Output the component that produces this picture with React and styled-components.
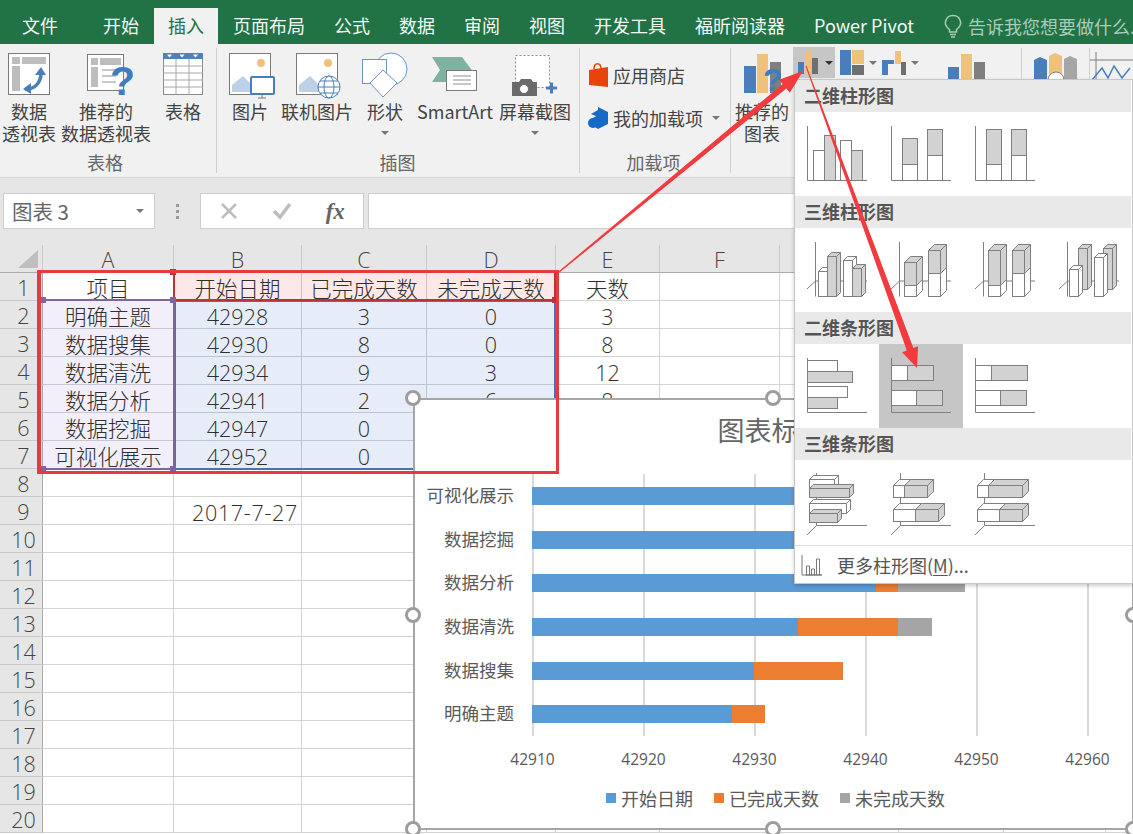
import React from "react";
import styled, { createGlobalStyle } from "styled-components";

const CJK = `"Noto Sans CJK SC", "Noto Sans", sans-serif`;
const CELL_FONT = `"Open Sans", "Noto Sans CJK SC", sans-serif`;

const GlobalStyle = createGlobalStyle`
  html, body {
    margin: 0;
    padding: 0;
    background: #fff;
    overflow: hidden;
  }
  * { box-sizing: border-box; }
  svg { overflow: visible; }
`;

const Page = styled.div`
  position: relative;
  width: 1133px;
  height: 834px;
  overflow: hidden;
  background: #fff;
  font-family: ${CJK};
  display: flex;
  flex-direction: column;
`;

/* ---------- tabs ---------- */
const TabBar = styled.div`
  height: 44px;
  flex: none;
  background: #217346;
  display: flex;
  align-items: flex-end;
  gap: 1px;
  padding-left: 8px;
  white-space: nowrap;
`;

const Tab = styled.div`
  height: 36px;
  padding: 0 14px;
  font-size: 18px;
  line-height: 35px;
  color: ${(p) => (p.$active ? "#217346" : "#f4f8f5")};
  background: ${(p) => (p.$active ? "#f1f1f1" : "transparent")};
  margin-right: ${(p) => p.$mr || 0}px;
`;

const TellMe = styled.div`
  display: flex;
  align-items: center;
  gap: 6px;
  height: 36px;
  margin-left: 15px;
  font-size: 18px;
  color: #a9ccb8;
`;

/* ---------- ribbon ---------- */
const Ribbon = styled.div`
  height: 134px;
  flex: none;
  display: flex;
  background: #f1f1f1;
  border-bottom: 1px solid #d6d6d6;
  color: #444;
`;

const Group = styled.div`
  width: ${(p) => p.$w}px;
  flex: none;
  display: flex;
  flex-direction: column;
  position: relative;
  &::after {
    content: "";
    position: absolute;
    right: 0;
    top: 4px;
    bottom: 4px;
    width: 1px;
    background: #cfcfcf;
  }
`;

const GroupBody = styled.div`
  flex: 1;
  display: flex;
  min-height: 0;
`;

const GroupLabel = styled.div`
  height: 27px;
  padding-right: ${(p) => p.$shift || 0}px;
  text-align: center;
  font-size: 18px;
  line-height: 24px;
  color: #666;
  white-space: nowrap;
`;

const LargeButton = styled.div`
  width: ${(p) => p.$w}px;
  flex: none;
  display: flex;
  flex-direction: column;
  align-items: center;
  font-size: 18px;
  line-height: 22px;
  text-align: center;
  white-space: nowrap;
`;

const IconSlot = styled.div`
  height: 56px;
  padding-top: ${(p) => p.$top ?? 9}px;
  flex: none;
  display: flex;
  align-items: flex-start;
  justify-content: center;
`;

const Caret = styled.span`
  display: inline-block;
  width: 0;
  height: 0;
  border-left: 4px solid transparent;
  border-right: 4px solid transparent;
  border-top: 4px solid ${(p) => p.$color || "#777"};
`;

const CaretLine = styled.div`
  height: 22px;
  display: flex;
  align-items: center;
  justify-content: center;
`;

const SmallColumn = styled.div`
  display: flex;
  flex-direction: column;
  gap: 11px;
  padding: 15px 0 0 8px;
`;

const SmallButton = styled.div`
  display: flex;
  align-items: center;
  gap: 5px;
  height: 32px;
  font-size: 18px;
  white-space: nowrap;
  span { margin-left: 4px; }
`;

const ChartButton = styled.div`
  width: ${(p) => p.$w}px;
  height: 31px;
  margin-top: 3px;
  flex: none;
  display: flex;
  align-items: center;
  gap: 5px;
  padding-left: 5px;
  background: ${(p) => (p.$on ? "#c6c6c6" : "transparent")};
`;

/* ---------- formula bar ---------- */
const FormulaBar = styled.div`
  height: 67px;
  flex: none;
  background: #e6e6e6;
  display: flex;
  padding: 15px 0 0 3px;
`;

const NameBox = styled.div`
  width: 152px;
  height: 36px;
  background: #fff;
  border: 1px solid #cdcdcd;
  display: flex;
  align-items: center;
  justify-content: space-between;
  padding: 0 10px 0 8px;
  font-size: 20.500px;
  color: #666;
`;

const Grip = styled.div`
  width: 45px;
  display: flex;
  flex-direction: column;
  align-items: center;
  justify-content: center;
  gap: 3px;
  height: 36px;
  span {
    width: 3px;
    height: 3px;
    background: #9a9a9a;
  }
`;

const FormulaButtons = styled.div`
  width: 164px;
  height: 36px;
  background: #fff;
  border: 1px solid #cdcdcd;
  display: flex;
  align-items: center;
  justify-content: space-around;
  padding: 0 2px;
  margin-right: 4px;
`;

const Fx = styled.span`
  font-family: "Liberation Serif", serif;
  font-style: italic;
  font-weight: 700;
  font-size: 23px;
  line-height: 1;
  color: #666;
`;

const FormulaInput = styled.div`
  flex: 1;
  height: 36px;
  background: #fff;
  border: 1px solid #cdcdcd;
  border-right: none;
`;

/* ---------- sheet ---------- */
const Sheet = styled.div`
  flex: none;
  display: grid;
  grid-template-columns: 43px 131px 128px 125px 129px 104px 120px 119px 105px 102px 27px;
  grid-auto-rows: 28px;
  font-family: ${CELL_FONT};
  font-size: 21.500px;
  font-weight: 300;
  color: #2f2f2f;
`;

const ColHead = styled.div`
  background: #e6e6e6;
  border-right: 1px solid #c9c9c9;
  border-bottom: 1px solid #ababab;
  text-align: center;
  padding-top: 3px;
  line-height: 24px;
  color: #444;
  position: relative;
`;

const Corner = styled.div`
  position: absolute;
  right: 4px;
  bottom: 4px;
  width: 0;
  height: 0;
  border-left: 20px solid transparent;
  border-bottom: 18px solid #bfbfbf;
`;

const RowHead = styled.div`
  background: #e6e6e6;
  border-right: 1px solid #ababab;
  border-bottom: 1px solid #c9c9c9;
  text-align: center;
  padding: 3px 0 0 5px;
  line-height: 24px;
  color: #444;
`;

const Cell = styled.div`
  background: ${(p) => p.$tint || "#fff"};
  border-right: 1px solid rgba(0, 0, 0, 0.17);
  border-bottom: 1px solid rgba(0, 0, 0, 0.17);
  text-align: ${(p) => (p.$right ? "right" : "center")};
  padding-top: 4px;
  padding-right: ${(p) => (p.$right ? 3 : 0)}px;
  letter-spacing: ${(p) => (p.$right ? 0.7 : 0)}px;
  line-height: 23px;
  white-space: nowrap;
`;

const RangeBox = styled.div`
  position: absolute;
  left: ${(p) => p.$x}px;
  top: ${(p) => p.$y}px;
  width: ${(p) => p.$w}px;
  height: ${(p) => p.$h}px;
  border: 2px solid ${(p) => p.$color};
  pointer-events: none;
`;

const RangeDot = styled.div`
  position: absolute;
  left: ${(p) => p.$x - 3}px;
  top: ${(p) => p.$y - 3}px;
  width: 6px;
  height: 6px;
  background: ${(p) => p.$color};
`;

const RedFrame = styled.div`
  position: absolute;
  left: 37px;
  top: 270px;
  width: 522px;
  height: 204px;
  border: 3px solid #e63a3e;
  border-left-width: 4px;
  pointer-events: none;
`;

/* ---------- chart ---------- */
const Chart = styled.div`
  position: absolute;
  left: 413px;
  top: 398px;
  width: 721px;
  height: 432px;
  background: #fff;
  border: 2px solid #a6a6a6;
  display: flex;
  flex-direction: column;
  color: #595959;
`;

const ChartTitle = styled.div`
  height: 74px;
  padding-top: 9px;
  padding-right: 4px;
  text-align: center;
  font-size: 27px;
  line-height: 42px;
  color: #666;
`;

const Plot = styled.div`
  display: flex;
  height: 262px;
`;

const Categories = styled.div`
  width: 117px;
  flex: none;
  display: flex;
  flex-direction: column;
`;

const Category = styled.div`
  flex: 1;
  padding-right: 18px;
  text-align: right;
  font-size: 17.500px;
  line-height: 42px;
  white-space: nowrap;
`;

const Bars = styled.div`
  width: 558px;
  display: flex;
  flex-direction: column;
  background: repeating-linear-gradient(to right, #d9d9d9 0 2px, transparent 2px 111px);
`;

const BarRow = styled.div`
  flex: 1;
  display: flex;
  align-items: center;
`;

const BarPart = styled.div`
  height: 18px;
  flex: none;
  background: ${(p) => p.$color};
`;

const AxisLabels = styled.div`
  display: grid;
  grid-template-columns: repeat(6, 111px);
  margin-left: 62px;
  height: 46px;
  font-family: "Open Sans", sans-serif;
  font-size: 15.500px;
  line-height: 46px;
  text-align: center;
`;

const Legend = styled.div`
  display: flex;
  justify-content: center;
  gap: 21px;
  padding-left: 4px;
  font-size: 18px;
  line-height: 32px;
`;

const LegendItem = styled.div`
  display: flex;
  align-items: center;
  gap: 5px;
  white-space: nowrap;
`;

const Swatch = styled.span`
  width: 10px;
  height: 10px;
  background: ${(p) => p.$color};
`;

const Handle = styled.div`
  position: absolute;
  left: ${(p) => p.$x - 8}px;
  top: ${(p) => p.$y - 8}px;
  width: 16px;
  height: 16px;
  border-radius: 50%;
  background: #fff;
  border: 3px solid #9d9d9d;
`;

/* ---------- chart type menu ---------- */
const Menu = styled.div`
  position: absolute;
  left: 794px;
  top: 79px;
  width: 339px;
  height: 505px;
  background: #fff;
  border: 1px solid #c6c6c6;
  box-shadow: 0 2px 4px rgba(0, 0, 0, 0.2);
  display: flex;
  flex-direction: column;
`;

const MenuHead = styled.div`
  height: 32px;
  margin-right: 1px;
  flex: none;
  background: #e9e9e9;
  padding-left: 9px;
  font-size: 18px;
  font-weight: 700;
  line-height: 31px;
  color: #555;
`;

const MenuRow = styled.div`
  height: 84px;
  flex: none;
  display: flex;
`;

const MenuCell = styled.div`
  width: 84px;
  height: 84px;
  background: ${(p) => (p.$on ? "#c6c6c6" : "transparent")};
`;

const MenuFoot = styled.div`
  flex: 1;
  margin-top: 1px;
  border-top: 1px solid #e1e1e1;
  display: flex;
  align-items: center;
  gap: 14px;
  padding-left: 6px;
  font-size: 18px;
  color: #555;
  u { text-underline-offset: 2px; }
`;

const Overlay = styled.svg`
  position: absolute;
  left: 0;
  top: 0;
  pointer-events: none;
`;

/* ---------- ribbon icons ---------- */
const PivotIcon = () => (
  <svg width="42" height="42" viewBox="0 0 42 42">
    <rect x=".5" y=".5" width="41" height="41" fill="#fff" stroke="#7a7a7a" />
    <rect x="4" y="4" width="8" height="7" fill="#bdbdbd" />
    <rect x="14" y="4" width="24" height="7" fill="#bdbdbd" />
    <rect x="4" y="13" width="8" height="25" fill="#bdbdbd" />
    <path d="M17 36 C26 37 33 30 33 20" fill="none" stroke="#4a7ebb" strokeWidth="3.5" />
    <path d="M27 22 L33 14 L38 22 Z M23 30 L15 36 L23 41 Z" fill="#4a7ebb" />
  </svg>
);

const RecommendPivotIcon = () => (
  <svg width="50" height="46" viewBox="-6 0 50 46">
    <rect x=".5" y=".5" width="36" height="36" fill="#fff" stroke="#7a7a7a" />
    <rect x="4" y="4" width="7" height="7" fill="#bdbdbd" />
    <rect x="13" y="4" width="21" height="7" fill="#bdbdbd" />
    <rect x="4" y="13" width="7" height="20" fill="#bdbdbd" />
    <path d="M15 16h14M15 22h14M15 28h14" stroke="#c9c9c9" strokeWidth="2" />
    <text x="23" y="41" fontFamily="Liberation Sans, sans-serif" fontWeight="700" fontSize="41" fill="#3f7cbf">?</text>
  </svg>
);

const TableIcon = () => (
  <svg width="40" height="42" viewBox="0 0 40 42">
    <rect x=".5" y=".5" width="39" height="41" fill="#fff" stroke="#8a8a8a" />
    <rect width="40" height="6" fill="#4f81bd" />
    <path d="M4 1.5h5l-2.5 3zM16.500 1.500h5l-2.500 3zM30 1.500h5l-2.500 3z" fill="#fff" />
    <path d="M0 13h40M0 20h40M0 27h40M0 34h40M13 6v36M26 6v36" stroke="#a8a8a8" />
  </svg>
);

const PictureIcon = ({ globe }) => (
  <svg width="46" height="46" viewBox="-2 0 46 46">
    <rect x=".5" y=".5" width="41" height="41" fill="#fff" stroke="#7a7a7a" />
    <circle cx="32" cy="10" r="4" fill="#efc27c" />
    <path d="M3 39 L3 32 L14 23 L24 33 L24 39 Z" fill="#bcd0e8" />
    {globe ? (
      <g fill="#fff" stroke="#4a7ebb" strokeWidth="1">
        <circle cx="33" cy="34" r="11" />
        <ellipse cx="33" cy="34" rx="5" ry="11" />
        <path d="M22 34h22M24 28h18M24 40h18" />
      </g>
    ) : (
      <g>
        <rect x="22" y="24" width="23" height="17" rx="1" fill="#fff" stroke="#4a7ebb" strokeWidth="2" />
        <path d="M33 42v3M29 45h8" stroke="#7a7a7a" />
      </g>
    )}
  </svg>
);

const ShapesIcon = () => (
  <svg width="46" height="46" viewBox="0 0 46 46">
    <circle cx="29" cy="17" r="16" fill="#fff" stroke="#6b93c4" />
    <rect x=".5" y="7.500" width="24" height="24" fill="#fff" stroke="#6b93c4" />
    <path d="M21 18 L35 31 L21 45 L8 31 Z" fill="#fff" stroke="#6b93c4" />
  </svg>
);

const SmartArtIcon = () => (
  <svg width="46" height="38" viewBox="0 0 46 38">
    <path d="M0 1h30l12 16h-13v9H0l8-12z" fill="#7fb2a2" />
    <rect x="14.500" y="14.500" width="30" height="20" fill="#fff" stroke="#7a7a7a" />
    <path d="M21 20h18M21 24h18M21 28h18" stroke="#8f8f8f" />
  </svg>
);

const ScreenshotIcon = () => (
  <svg width="46" height="44" viewBox="0 0 46 44">
    <rect x="3.500" y=".5" width="34" height="32" fill="#fff" stroke="#8f8f8f" strokeDasharray="2 2" />
    <path d="M0 27h7l2-3h10l2 3h4v14H0z" fill="#6a6a6a" />
    <circle cx="12" cy="34" r="4.500" fill="#fff" stroke="#6a6a6a" />
    <path d="M34 33h11M39.500 27.500v11" stroke="#4a7ebb" strokeWidth="3" />
  </svg>
);

const StoreIcon = () => (
  <svg width="20" height="26" viewBox="0 0 20 26">
    <path d="M6 7 C6 0 13 0 13 7" fill="none" stroke="#e8430a" strokeWidth="1.500" />
    <path d="M1 8 L20 5 V25 L1 23 Z" fill="#e8430a" />
  </svg>
);

const AddinIcon = () => (
  <svg width="20" height="24" viewBox="0 0 20 24">
    <path d="M10 1 L20 6 V18 L10 23 L5 20 V12 L10 9z" fill="#1569c7" />
    <path d="M3 8 L10 4 L17 8 L10 11z" fill="#1569c7" />
    <circle cx="5" cy="17" r="5" fill="#1569c7" />
  </svg>
);

const RecommendChartIcon = () => (
  <svg width="56" height="42" viewBox="-10 0 56 42">
    <rect x="0" y="12" width="12" height="27" fill="#4a7ebb" />
    <rect x="13" y="0" width="11" height="39" fill="#efc27c" />
    <rect x="26" y="8" width="11" height="31" fill="#7f7f7f" />
    <text x="19" y="37" fontFamily="Liberation Sans, sans-serif" fontWeight="700" fontSize="32" fill="#3f7cbf">?</text>
  </svg>
);

const ColumnTypeIcon = () => (
  <svg width="22" height="26" viewBox="0 0 22 26">
    <rect x="0" y="12" width="6" height="12" fill="#4a7ebb" />
    <rect x="7" y="1" width="6" height="23" fill="#efc27c" />
    <rect x="14" y="8" width="6" height="16" fill="#6f6f6f" />
  </svg>
);

const HierarchyIcon = () => (
  <svg width="24" height="26" viewBox="0 0 24 26">
    <rect x="0" y="0" width="11" height="25" fill="#4a7ebb" />
    <rect x="12" y="0" width="12" height="14" fill="#efc27c" />
    <rect x="12" y="15" width="12" height="10" fill="#6f6f6f" />
  </svg>
);

const WaterfallIcon = () => (
  <svg width="24" height="26" viewBox="0 0 24 26">
    <rect x="0" y="10" width="6" height="15" fill="#4a7ebb" />
    <rect x="6" y="10" width="6" height="4" fill="#4a7ebb" />
    <rect x="13" y="1" width="6" height="13" fill="#efc27c" />
    <rect x="19" y="12" width="5" height="13" fill="#6f6f6f" />
  </svg>
);

const PivotChartIcon = () => (
  <svg width="38" height="38" viewBox="0 0 38 38">
    <rect x="0" y="13" width="11" height="25" fill="#4a7ebb" />
    <rect x="13" y="0" width="11" height="38" fill="#efc27c" />
    <rect x="26" y="8" width="11" height="30" fill="#7f7f7f" />
  </svg>
);

const MapIcon = () => (
  <svg width="44" height="30" viewBox="0 0 44 30">
    <path d="M0 8l6-3 7 3v22H0z" fill="#4a7ebb" />
    <path d="M15 4l6-3 7 3v26H15z" fill="#efc27c" />
    <path d="M30 7l6-3 7 3v23H30z" fill="#a6a6a6" />
    <circle cx="22" cy="28" r="8" fill="#fff" stroke="#7f7f7f" />
  </svg>
);

const SparkIcon = () => (
  <svg width="44" height="30" viewBox="0 0 44 30">
    <path d="M6 0v30M0 8h44" stroke="#7f7f7f" />
    <path d="M2 28 L12 16 L18 26 L24 14 L32 26 L40 16" fill="none" stroke="#4a7ebb" strokeWidth="1.500" />
  </svg>
);

const BulbIcon = () => (
  <svg width="18" height="24" viewBox="0 0 18 24">
    <path d="M5.500 15.500 C2 13 1 10 1.500 7.500 C2.500 3 6 1.500 9 1.500 C12 1.500 15.500 3 16.500 7.500 C17 10 16 13 12.500 15.500 V18 H5.500 Z" fill="none" stroke="#a9ccb8" strokeWidth="1.500" />
    <path d="M6 20.500h6M7 23h4" stroke="#a9ccb8" strokeWidth="1.500" />
  </svg>
);

const CrossIcon = () => (
  <svg width="20" height="20" viewBox="0 0 20 20">
    <path d="M3 3L17 17M17 3L3 17" stroke="#bdbdbd" strokeWidth="2.500" />
  </svg>
);

const CheckIcon = () => (
  <svg width="22" height="20" viewBox="0 0 22 20">
    <path d="M3 10 L9 16 L19 3" fill="none" stroke="#bdbdbd" strokeWidth="3.500" />
  </svg>
);

/* ---------- menu icons ---------- */
const LINE = "#7f7f7f";
const GREY = "#d2d2d2";

const Box = ({ x, y, w, h, fill = "#fff" }) => (
  <rect x={x} y={y} width={w} height={h} fill={fill} stroke={LINE} />
);

const Box3D = ({ x, y, w, h, d = 4, fill = "#fff" }) => (
  <g fill={fill} stroke={LINE}>
    <rect x={x} y={y} width={w} height={h} />
    <polygon points={`${x},${y} ${x + d},${y - d} ${x + w + d},${y - d} ${x + w},${y}`} />
    <polygon points={`${x + w},${y} ${x + w + d},${y - d} ${x + w + d},${y + h - d} ${x + w},${y + h}`} />
  </g>
);

const MenuIcon = ({ children }) => (
  <svg width="84" height="84" viewBox="0 0 84 84" style={{ display: "block" }}>
    {children}
  </svg>
);

const Axes2D = () => <path d="M12.500 14V68.500H72" fill="none" stroke={LINE} />;
const Axes3D = () => <path d="M20.500 14V68.500M20.500 53H72M20.500 53L12 61" fill="none" stroke={LINE} />;
const AxesBar3D = () => <path d="M21.500 13V65.500H72M21.500 65.500L12 75" fill="none" stroke={LINE} />;

const menuSections = [
  {
    title: "二维柱形图",
    icons: [
      <MenuIcon key="a">
        <Box x={18.5} y={38.5} w={11} h={30} />
        <Box x={29.5} y={23.5} w={11} h={45} fill={GREY} />
        <Box x={45.5} y={28.5} w={11} h={40} />
        <Box x={56.5} y={38.5} w={11} h={30} fill={GREY} />
        <Axes2D />
      </MenuIcon>,
      <MenuIcon key="b">
        <Box x={23.5} y={52.5} w={15} h={16} />
        <Box x={23.5} y={26.5} w={15} h={26} fill={GREY} />
        <Box x={48.5} y={43.5} w={15} h={25} />
        <Box x={48.5} y={17.5} w={15} h={26} fill={GREY} />
        <Axes2D />
      </MenuIcon>,
      <MenuIcon key="c">
        <Box x={23.5} y={52.5} w={15} h={16} />
        <Box x={23.5} y={17.5} w={15} h={35} fill={GREY} />
        <Box x={48.5} y={43.5} w={15} h={25} />
        <Box x={48.5} y={17.5} w={15} h={26} fill={GREY} />
        <Axes2D />
      </MenuIcon>,
    ],
  },
  {
    title: "三维柱形图",
    icons: [
      <MenuIcon key="a">
        <Axes3D />
        <Box3D x={23.5} y={43.5} w={9} h={25} />
        <Box3D x={32.5} y={28.5} w={9} h={40} fill={GREY} />
        <Box3D x={48.5} y={32.5} w={9} h={36} />
        <Box3D x={57.5} y={40.5} w={9} h={28} fill={GREY} />
      </MenuIcon>,
      <MenuIcon key="b">
        <Axes3D />
        <Box3D x={25.5} y={57.5} w={12} h={11} d={6} />
        <Box3D x={25.5} y={34.5} w={12} h={23} d={6} fill={GREY} />
        <Box3D x={49.5} y={45.5} w={12} h={23} d={6} />
        <Box3D x={49.5} y={22.5} w={12} h={23} d={6} fill={GREY} />
      </MenuIcon>,
      <MenuIcon key="c">
        <Axes3D />
        <Box3D x={25.5} y={57.5} w={12} h={11} d={6} />
        <Box3D x={25.5} y={22.5} w={12} h={35} d={6} fill={GREY} />
        <Box3D x={49.5} y={45.5} w={12} h={23} d={6} />
        <Box3D x={49.5} y={22.5} w={12} h={23} d={6} fill={GREY} />
      </MenuIcon>,
      <MenuIcon key="d">
        <Axes3D />
        <Box3D x={31.5} y={20.5} w={9} h={41} fill={GREY} />
        <Box3D x={56.5} y={20.5} w={9} h={41} fill={GREY} />
        <Box3D x={22.5} y={41.5} w={9} h={27} />
        <Box3D x={47.5} y={29.5} w={9} h={39} />
      </MenuIcon>,
    ],
  },
  {
    title: "二维条形图",
    icons: [
      <MenuIcon key="a">
        <Box x={12.5} y={16.5} w={30} h={11} />
        <Box x={12.5} y={27.5} w={45} h={11} fill={GREY} />
        <Box x={12.5} y={42.5} w={40} h={11} />
        <Box x={12.5} y={53.5} w={30} h={11} fill={GREY} />
        <Axes2D />
      </MenuIcon>,
      <MenuIcon key="b">
        <Box x={12.5} y={21.5} w={16} h={15} />
        <Box x={28.5} y={21.5} w={26} h={15} fill={GREY} />
        <Box x={12.5} y={46.5} w={25} h={15} />
        <Box x={37.5} y={46.5} w={26} h={15} fill={GREY} />
        <Axes2D />
      </MenuIcon>,
      <MenuIcon key="c">
        <Box x={12.5} y={21.5} w={16} h={15} />
        <Box x={28.5} y={21.5} w={36} h={15} fill={GREY} />
        <Box x={12.5} y={46.5} w={25} h={15} />
        <Box x={37.5} y={46.5} w={26} h={15} fill={GREY} />
        <Axes2D />
      </MenuIcon>,
    ],
  },
  {
    title: "三维条形图",
    icons: [
      <MenuIcon key="a">
        <AxesBar3D />
        <Box3D x={14.5} y={19.5} w={25} h={9} />
        <Box3D x={14.5} y={28.5} w={40} h={9} fill={GREY} />
        <Box3D x={14.5} y={43.5} w={37} h={10} />
        <Box3D x={14.5} y={53.5} w={28} h={9} fill={GREY} />
      </MenuIcon>,
      <MenuIcon key="b">
        <AxesBar3D />
        <Box3D x={14.5} y={25.5} w={11} h={12} d={6} />
        <Box3D x={25.5} y={25.5} w={23} h={12} d={6} fill={GREY} />
        <Box3D x={14.5} y={49.5} w={22} h={12} d={6} />
        <Box3D x={36.5} y={49.5} w={23} h={12} d={6} fill={GREY} />
      </MenuIcon>,
      <MenuIcon key="c">
        <AxesBar3D />
        <Box3D x={14.5} y={25.5} w={11} h={12} d={6} />
        <Box3D x={25.5} y={25.5} w={34} h={12} d={6} fill={GREY} />
        <Box3D x={14.5} y={49.5} w={22} h={12} d={6} />
        <Box3D x={36.5} y={49.5} w={23} h={12} d={6} fill={GREY} />
      </MenuIcon>,
    ],
  },
];

const MoreChartsIcon = () => (
  <svg width="22" height="22" viewBox="0 0 22 22">
    <path d="M1 1V21H21" fill="none" stroke="#777" />
    <path d="M5.500 21V12h3v9M10.500 21V15h3v6M15.500 21V5h3v16M5 21h16" fill="none" stroke="#777" />
  </svg>
);

/* ---------- data ---------- */
const tabs = ["开始", "插入", "页面布局", "公式", "数据", "审阅", "视图", "开发工具", "福昕阅读器", "Power Pivot"];
const columns = ["A", "B", "C", "D", "E", "F", "G", "H", "I", "J"];
const PINK = "#fce9e7";
const BLUE = "#e6edf8";
const LILAC = "#f2eefa";

const table = [
  ["项目", "开始日期", "已完成天数", "未完成天数", "天数"],
  ["明确主题", 42928, 3, 0, 3],
  ["数据搜集", 42930, 8, 0, 8],
  ["数据清洗", 42934, 9, 3, 12],
  ["数据分析", 42941, 2, 6, 8],
  ["数据挖掘", 42947, 0, 5, 5],
  ["可视化展示", 42952, 0, 5, 5],
];

const AXIS_MIN = 42910;
const PX_PER_DAY = 11.1;
const chartRows = table.slice(1).reverse();
const ticks = [42910, 42920, 42930, 42940, 42950, 42960];
const legend = [
  ["开始日期", "#5b9bd5"],
  ["已完成天数", "#ed7d31"],
  ["未完成天数", "#a5a5a5"],
];

const handles = [
  [0, 0],
  [360, 0],
  [720, 0],
  [0, 217],
  [720, 217],
  [0, 431],
  [360, 431],
  [720, 431],
];

const cellValue = (row, col) => {
  if (row === 9 && col === 1) return "2017-7-27";
  const line = table[row - 1];
  return line && line[col] !== undefined ? line[col] : "";
};

const cellTint = (row, col) => {
  if (row === 1 && col >= 1 && col <= 3) return PINK;
  if (row >= 2 && row <= 7 && col === 0) return LILAC;
  if (row >= 2 && row <= 7 && col >= 1 && col <= 3) return BLUE;
  return undefined;
};

// tapered arrow as drawn by hand on top of the screenshot
const arrowPoints = (x1, y1, x2, y2, w0, w1, headLen, headW) => {
  const len = Math.hypot(x2 - x1, y2 - y1);
  const ux = (x2 - x1) / len;
  const uy = (y2 - y1) / len;
  const nx = -uy;
  const ny = ux;
  const bx = x2 - ux * headLen;
  const by = y2 - uy * headLen;
  const p = (x, y, n) => `${x + nx * n},${y + ny * n}`;
  return [
    p(x1, y1, w0 / 2),
    p(bx, by, w1 / 2),
    p(bx, by, headW / 2),
    `${x2},${y2}`,
    p(bx, by, -headW / 2),
    p(bx, by, -w1 / 2),
    p(x1, y1, -w0 / 2),
  ].join(" ");
};

export default function App() {
  return (
    <Page>
      <GlobalStyle />
      <TabBar>
        <Tab $mr={16}>文件</Tab>
        {tabs.map((t) => (
          <Tab key={t} $active={t === "插入"}>
            {t}
          </Tab>
        ))}
        <TellMe>
          <BulbIcon />
          告诉我您想要做什么...
        </TellMe>
      </TabBar>

      <Ribbon>
        <Group $w={217}>
          <GroupBody>
            <LargeButton $w={58}>
              <IconSlot><PivotIcon /></IconSlot>
              数据
              <br />
              透视表
            </LargeButton>
            <LargeButton $w={96}>
              <IconSlot $top={10}><RecommendPivotIcon /></IconSlot>
              推荐的
              <br />
              数据透视表
            </LargeButton>
            <LargeButton $w={58}>
              <IconSlot><TableIcon /></IconSlot>
              表格
            </LargeButton>
          </GroupBody>
          <GroupLabel $shift={7}>表格</GroupLabel>
        </Group>

        <Group $w={363}>
          <GroupBody>
            <LargeButton $w={66}>
              <IconSlot><PictureIcon /></IconSlot>
              图片
            </LargeButton>
            <LargeButton $w={68}>
              <IconSlot><PictureIcon globe /></IconSlot>
              联机图片
            </LargeButton>
            <LargeButton $w={68}>
              <IconSlot $top={8}><ShapesIcon /></IconSlot>
              形状
              <CaretLine><Caret /></CaretLine>
            </LargeButton>
            <LargeButton $w={72}>
              <IconSlot $top={12}><SmartArtIcon /></IconSlot>
              SmartArt
            </LargeButton>
            <LargeButton $w={88}>
              <IconSlot $top={11}><ScreenshotIcon /></IconSlot>
              屏幕截图
              <CaretLine><Caret /></CaretLine>
            </LargeButton>
          </GroupBody>
          <GroupLabel $shift={2}>插图</GroupLabel>
        </Group>

        <Group $w={151}>
          <GroupBody>
            <SmallColumn>
              <SmallButton>
                <StoreIcon />
                应用商店
              </SmallButton>
              <SmallButton>
                <AddinIcon />
                我的加载项
                <Caret />
              </SmallButton>
            </SmallColumn>
          </GroupBody>
          <GroupLabel $shift={4}>加载项</GroupLabel>
        </Group>

        <Group $w={291}>
          <GroupBody>
            <LargeButton $w={62}>
              <IconSlot $top={10}><RecommendChartIcon /></IconSlot>
              推荐的
              <br />
              图表
            </LargeButton>
            <ChartButton $w={42} $on>
              <ColumnTypeIcon />
              <Caret $color="#333" />
            </ChartButton>
            <ChartButton $w={42}>
              <HierarchyIcon />
              <Caret />
            </ChartButton>
            <ChartButton $w={42}>
              <WaterfallIcon />
              <Caret />
            </ChartButton>
            <ChartButton $w={29} />
            <IconSlot $top={10}><PivotChartIcon /></IconSlot>
          </GroupBody>
          <GroupLabel>图表</GroupLabel>
        </Group>

        <Group $w={68}>
          <GroupBody>
            <LargeButton $w={68}>
              <IconSlot $top={8}><MapIcon /></IconSlot>
            </LargeButton>
          </GroupBody>
        </Group>

        <LargeButton $w={44}>
          <IconSlot $top={8}><SparkIcon /></IconSlot>
        </LargeButton>
      </Ribbon>

      <FormulaBar>
        <NameBox>
          图表 3
          <Caret />
        </NameBox>
        <Grip>
          <span />
          <span />
          <span />
        </Grip>
        <FormulaButtons>
          <CrossIcon />
          <CheckIcon />
          <Fx>fx</Fx>
        </FormulaButtons>
        <FormulaInput />
      </FormulaBar>

      <Sheet>
        <ColHead>
          <Corner />
        </ColHead>
        {columns.map((c) => (
          <ColHead key={c}>{c}</ColHead>
        ))}
        {Array.from({ length: 20 }, (_, i) => i + 1).map((row) => (
          <React.Fragment key={row}>
            <RowHead>{row}</RowHead>
            {columns.map((c, col) => (
              <Cell key={c} $tint={cellTint(row, col)} $right={row === 9 && col === 1}>
                {cellValue(row, col)}
              </Cell>
            ))}
          </React.Fragment>
        ))}
      </Sheet>

      <RangeBox $x={174} $y={300} $w={382} $h={170} $color="#4f6fb5" />
      <RangeBox $x={173} $y={271} $w={383} $h={30} $color="#b5353a" />
      <RangeBox $x={39} $y={299} $w={136} $h={171} $color="#8064a2" />
      <RangeDot $x={43} $y={300} $color="#8064a2" />
      <RangeDot $x={173} $y={300} $color="#8064a2" />
      <RangeDot $x={43} $y={469} $color="#8064a2" />
      <RangeDot $x={173} $y={469} $color="#8064a2" />
      <RangeDot $x={173} $y={272} $color="#b5353a" />
      <RangeDot $x={555} $y={300} $color="#b5353a" />

      <Chart>
        <ChartTitle>图表标题</ChartTitle>
        <Plot>
          <Categories>
            {chartRows.map((r) => (
              <Category key={r[0]}>{r[0]}</Category>
            ))}
          </Categories>
          <Bars>
            {chartRows.map((r) => (
              <BarRow key={r[0]}>
                <BarPart $color="#5b9bd5" style={{ width: (r[1] - AXIS_MIN) * PX_PER_DAY }} />
                <BarPart $color="#ed7d31" style={{ width: r[2] * PX_PER_DAY }} />
                <BarPart $color="#a5a5a5" style={{ width: r[3] * PX_PER_DAY }} />
              </BarRow>
            ))}
          </Bars>
        </Plot>
        <AxisLabels>
          {ticks.map((t) => (
            <span key={t}>{t}</span>
          ))}
        </AxisLabels>
        <Legend>
          {legend.map(([name, color]) => (
            <LegendItem key={name}>
              <Swatch $color={color} />
              {name}
            </LegendItem>
          ))}
        </Legend>
      </Chart>
      {handles.map(([x, y]) => (
        <Handle key={`${x}-${y}`} $x={413 + x} $y={398 + y} />
      ))}

      <RedFrame />

      <Menu>
        {menuSections.map((s) => (
          <React.Fragment key={s.title}>
            <MenuHead>{s.title}</MenuHead>
            <MenuRow>
              {s.icons.map((icon, i) => (
                <MenuCell key={i} $on={s.title === "二维条形图" && i === 1}>
                  {icon}
                </MenuCell>
              ))}
            </MenuRow>
          </React.Fragment>
        ))}
        <MenuFoot>
          <MoreChartsIcon />
          <span>
            更多柱形图(<u>M</u>)...
          </span>
        </MenuFoot>
      </Menu>

      <Overlay width="1133" height="834" viewBox="0 0 1133 834">
        <polygon points={arrowPoints(559, 272, 803, 71, 1.5, 6, 24, 17)} fill="#f23b3f" />
        <polygon points={arrowPoints(806, 66, 917, 368, 1, 7, 20, 17)} fill="#f23b3f" />
      </Overlay>
    </Page>
  );
}
